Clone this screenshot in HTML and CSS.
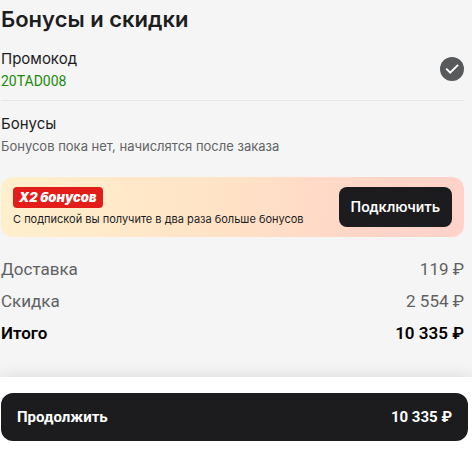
FILE: index.html
```html
<!DOCTYPE html>
<html lang="ru">
<head>
<meta charset="utf-8">
<meta name="viewport" content="width=device-width, initial-scale=1">
<title>Бонусы и скидки</title>
<link rel="stylesheet" href="styles.css">
</head>
<body>
<main class="checkout">
  <h1 class="title">Бонусы и скидки</h1>
  <section class="promo">
    <div>
      <h2 class="label">Промокод</h2>
      <p class="code">20TAD008</p>
    </div>
    <svg class="check" viewBox="0 0 24 24" aria-hidden="true">
      <circle cx="12" cy="12" r="12" fill="#58595b"/>
      <path d="M6.2 11.6l4 4.1 7.9-7.8" fill="none" stroke="#fff" stroke-width="2"/>
    </svg>
  </section>
  <section class="bonus">
    <h2 class="label">Бонусы</h2>
    <p class="note">Бонусов пока нет, начислятся после заказа</p>
  </section>
  <section class="banner">
    <div class="offer">
      <strong class="tag">X2 бонусов</strong>
      <p class="terms">С подпиской вы получите в два раза больше бонусов</p>
    </div>
    <button class="connect" type="button">Подключить</button>
  </section>
  <dl class="summary">
    <div class="row"><dt>Доставка</dt><dd>119 ₽</dd></div>
    <div class="row"><dt>Скидка</dt><dd>2 554 ₽</dd></div>
    <div class="row total"><dt>Итого</dt><dd>10 335 ₽</dd></div>
  </dl>
</main>
<footer class="footer">
  <button class="continue" type="button"><span>Продолжить</span><span>10 335 ₽</span></button>
</footer>
</body>
</html>
```
FILE: styles.css
```css
* { box-sizing: border-box; }
body {
  margin: 0;
  background: #fff;
  color: #1d1d1f;
  font-family: Roboto, "Liberation Sans", sans-serif;
}
h1, h2, p, dl, dd { margin: 0; }
button { border: 0; font-family: inherit; color: #fff; background: #1c1c1e; cursor: pointer; }
.title, .label, .note, .tag, .terms { font-family: Inter, "Liberation Sans", sans-serif; }
.checkout { padding: 3px 8px 28px 1px; background: #f5f5f5; }
.title { font-size: 22px; line-height: 32px; font-weight: 600; }
.promo {
  display: flex;
  align-items: center;
  justify-content: space-between;
  padding: 12px 0 9px;
  border-bottom: 1px solid #e6e7e8;
}
.label { font-size: 15px; line-height: 24px; font-weight: 400; }
.code { font-size: 14px; line-height: 20px; color: #1a8a0c; }
.check { width: 24px; height: 24px; }
.bonus { padding: 11px 0 21px; }
.note { font-size: 13px; line-height: 20px; color: #626467; }
.banner {
  display: flex;
  align-items: center;
  justify-content: space-between;
  padding: 10px 12px;
  border-radius: 12px;
  background: linear-gradient(100deg, #fff0cc, #ffe2c6 50%, #ffd5c8 80%, #ffd2ca);
}
.tag {
  display: inline-block;
  padding: 0 6px;
  border-radius: 4px;
  background: #e31e1a;
  color: #fff;
  font-size: 13px;
  line-height: 21px;
  font-weight: 900;
  font-style: italic;
  vertical-align: top;
}
.terms { padding-top: 3px; font-size: 11px; line-height: 16px; }
.connect { padding: 0 12px; border-radius: 8px; font-size: 15px; line-height: 40px; font-weight: 500; }
.summary { padding-top: 16px; }
.row {
  display: flex;
  justify-content: space-between;
  font-size: 17px;
  line-height: 32px;
  color: #606164;
}
.total { color: #000; font-weight: 600; }
.footer {
  position: relative;
  padding: 16px 4px 10px 1px;
  background: #fff;
  box-shadow: 0 0 16px rgba(0, 0, 0, 0.12);
}
.continue {
  display: flex;
  justify-content: space-between;
  width: 100%;
  padding: 0 16px;
  border-radius: 12px;
  font-size: 15px;
  line-height: 48px;
  font-weight: 700;
}
```
